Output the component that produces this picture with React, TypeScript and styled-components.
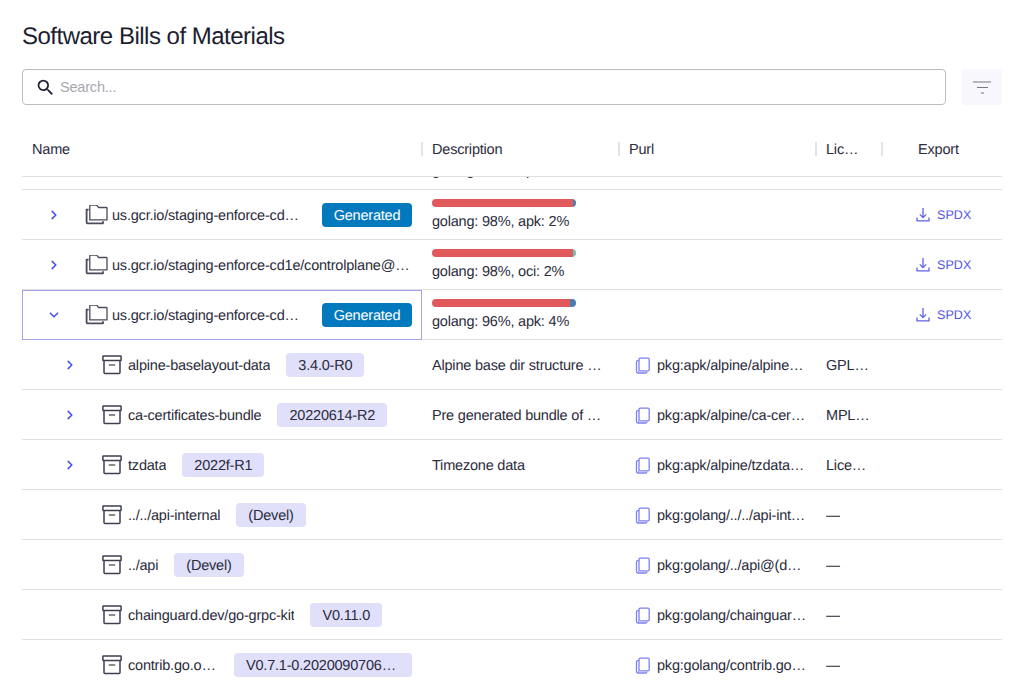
import styled, { createGlobalStyle } from 'styled-components';

const GlobalStyle = createGlobalStyle`
  html, body {
    margin: 0;
    height: 688px;
    overflow: hidden;
    background: #ffffff;
  }
`;

interface IChunk {
  color: string;
  percent: number;
}

interface IRow {
  name: string;
  level: 0 | 1;
  nameWidth?: number;
  badge?: string;
  generated?: boolean;
  expander?: 'right' | 'down';
  selected?: boolean;
  chunks?: IChunk[];
  summary?: string;
  description?: string;
  purl?: string;
  license?: string;
  exportable?: boolean;
}

const RED = '#e2595c';
const BLUE = '#4a7cae';
const TEAL = '#70bdb1';

const rows: IRow[] = [
  {
    name: 'us.gcr.io/staging-enforce-cd1e/controlplane@sha256',
    level: 0,
    nameWidth: 189,
    generated: true,
    expander: 'right',
    chunks: [
      { color: RED, percent: 98 },
      { color: BLUE, percent: 2 },
    ],
    summary: 'golang: 98%, apk: 2%',
    exportable: true,
  },
  {
    name: 'us.gcr.io/staging-enforce-cd1e/controlplane@sha256',
    level: 0,
    expander: 'right',
    chunks: [
      { color: RED, percent: 98 },
      { color: TEAL, percent: 2 },
    ],
    summary: 'golang: 98%, oci: 2%',
    exportable: true,
  },
  {
    name: 'us.gcr.io/staging-enforce-cd1e/controlplane@sha256',
    level: 0,
    nameWidth: 189,
    generated: true,
    expander: 'down',
    selected: true,
    chunks: [
      { color: RED, percent: 96 },
      { color: BLUE, percent: 4 },
    ],
    summary: 'golang: 96%, apk: 4%',
    exportable: true,
  },
  {
    name: 'alpine-baselayout-data',
    level: 1,
    badge: '3.4.0-R0',
    expander: 'right',
    description: 'Alpine base dir structure and init scripts',
    purl: 'pkg:apk/alpine/alpine-baselayout-data@3.4.0-r0',
    license: 'GPL-2.0-only',
  },
  {
    name: 'ca-certificates-bundle',
    level: 1,
    badge: '20220614-R2',
    expander: 'right',
    description: 'Pre generated bundle of Mozilla certificates',
    purl: 'pkg:apk/alpine/ca-certificates-bundle@20220614-r2',
    license: 'MPL-2.0 AND MIT',
  },
  {
    name: 'tzdata',
    level: 1,
    badge: '2022f-R1',
    expander: 'right',
    description: 'Timezone data',
    purl: 'pkg:apk/alpine/tzdata@2022f-r1',
    license: 'License-Ref',
  },
  {
    name: '../../api-internal',
    level: 1,
    badge: '(Devel)',
    purl: 'pkg:golang/../../api-internal@(devel)',
    license: '—',
  },
  {
    name: '../api',
    level: 1,
    badge: '(Devel)',
    purl: 'pkg:golang/../api@(devel)#module',
    license: '—',
  },
  {
    name: 'chainguard.dev/go-grpc-kit',
    level: 1,
    badge: 'V0.11.0',
    purl: 'pkg:golang/chainguard.dev/go-grpc-kit@v0.11.0',
    license: '—',
  },
  {
    name: 'contrib.go.opencensus.io/exporter',
    level: 1,
    nameWidth: 90,
    badge: 'V0.7.1-0.20200907061046-05415f1de66d',
    purl: 'pkg:golang/contrib.go.opencensus.io/exporter',
    license: '—',
  },
];

function SearchIcon() {
  return (
    <svg width="21" height="21" viewBox="0 0 24 24" fill="#1f2133">
      <path d="M15.5 14h-.79l-.28-.27A6.47 6.47 0 0 0 16 9.5 6.5 6.5 0 1 0 9.5 16c1.61 0 3.09-.59 4.23-1.57l.27.28v.79l5 4.99L20.49 19l-4.99-5zm-6 0C7.01 14 5 11.99 5 9.5S7.01 5 9.5 5 14 7.01 14 9.5 11.99 14 9.5 14z" />
    </svg>
  );
}

function FilterIcon() {
  return (
    <svg width="18" height="13" viewBox="0 0 18 13" fill="none" stroke="#77777f" strokeWidth="1.2">
      <path d="M0 1h18M4 6.5h11M8 12h3" />
    </svg>
  );
}

function Chevron({ down }: { down: boolean }) {
  return (
    <svg width="16" height="16" viewBox="0 0 16 16" fill="none" stroke="#4f52e6" strokeWidth="1.6" strokeLinecap="round" strokeLinejoin="round">
      <path d={down ? 'M4.4 6.2 8 9.8l3.6-3.6' : 'M6.2 4.4 9.8 8l-3.6 3.6'} />
    </svg>
  );
}

function ImageStackIcon() {
  return (
    <svg width="23" height="20" viewBox="0 0.9 23 20" fill="none" stroke="#4a4b5c" strokeWidth="1.3" strokeLinejoin="round">
      <path d="M4.8 15.8V1.8c0-.5.3-.8.8-.8h6l2 2.4h7.6c.5 0 .8.3.8.8v11.6z" />
      <path d="M3.6 5.6H1.6v12.8c0 .5.3.8.8.8H18v-2" strokeWidth="1.8" />
    </svg>
  );
}

function ArchiveIcon() {
  return (
    <svg width="20" height="20" viewBox="0 0 20 20" fill="none" stroke="#3e3f50" strokeWidth="1.5" strokeLinejoin="round">
      <rect x="0.9" y="1" width="18.2" height="4.4" rx="0.5" />
      <path d="M2 5.4v12c0 .6.4 1 1 1h14c.6 0 1-.4 1-1v-12" />
      <path d="M6.8 10h6.4" strokeWidth="1.2" />
    </svg>
  );
}

function CopyIcon() {
  return (
    <svg width="16" height="17" viewBox="0 0 16 17" fill="none" stroke="#7d80ef" strokeWidth="1.3" strokeLinejoin="round">
      <rect x="4" y="1.2" width="10.2" height="12.6" rx="1.2" />
      <path d="M4 3.6H2.9c-.8 0-1.4.6-1.4 1.4v9.6c0 .8.6 1.4 1.4 1.4h7.6c.8 0 1.4-.5 1.4-1.2" />
      <path d="M3 14.4h1" strokeWidth="1" />
    </svg>
  );
}

function DownloadIcon() {
  return (
    <svg width="16" height="16" viewBox="0 0 16 16" fill="none" stroke="#5f62e8" strokeWidth="1.3" strokeLinejoin="round">
      <path d="M8 1v9.5M4.8 7.4 8 10.6l3.2-3.2" />
      <path d="M2 10.5v3.4h12v-3.4" />
    </svg>
  );
}

function NameCell({ row }: { row: IRow }) {
  return (
    <NameBox $selected={row.selected}>
      <ExpanderSlot $level={row.level}>{row.expander && <Chevron down={row.expander === 'down'} />}</ExpanderSlot>
      <IconSlot $level={row.level}>{row.level === 0 ? <ImageStackIcon /> : <ArchiveIcon />}</IconSlot>
      <NameText $width={row.nameWidth}>{row.name}</NameText>
      {row.generated && <GeneratedBadge>Generated</GeneratedBadge>}
      {row.badge && <VersionBadge>{row.badge}</VersionBadge>}
    </NameBox>
  );
}

function App() {
  return (
    <Page>
      <GlobalStyle />
      <Title>Software Bills of Materials</Title>
      <Toolbar>
        <SearchBox>
          <SearchIcon />
          <SearchInput placeholder="Search..." />
        </SearchBox>
        <FilterButton>
          <FilterIcon />
        </FilterButton>
      </Toolbar>
      <Table>
        <HeaderRow>
          <HeaderCell>Name</HeaderCell>
          <HeaderCell>Description</HeaderCell>
          <HeaderCell>Purl</HeaderCell>
          <HeaderCell>Lic…</HeaderCell>
          <ExportHeader>Export</ExportHeader>
        </HeaderRow>
        <ClippedRow>
          <Summary>golang: 98%, apk: 2%</Summary>
        </ClippedRow>
        {rows.map((row, index) => (
          <Row key={index}>
            <NameCell row={row} />
            <DescriptionCell>
              {row.chunks && (
                <>
                  <Bar>
                    {row.chunks.map((chunk) => (
                      <BarChunk key={chunk.color} $color={chunk.color} $percent={chunk.percent} />
                    ))}
                  </Bar>
                  <Summary>{row.summary}</Summary>
                </>
              )}
              {row.description && <CellText>{row.description}</CellText>}
            </DescriptionCell>
            <PurlCell>
              {row.purl && (
                <>
                  <CopyIcon />
                  <CellText>{row.purl}</CellText>
                </>
              )}
            </PurlCell>
            <LicenseCell>{row.license && <CellText>{row.license}</CellText>}</LicenseCell>
            <ExportCell>
              {row.exportable && (
                <ExportLink>
                  <DownloadIcon />
                  SPDX
                </ExportLink>
              )}
            </ExportCell>
          </Row>
        ))}
      </Table>
    </Page>
  );
}

export default App;

const COLUMNS = '400px 197px 197px 66px 120px';

const Page = styled.div`
  padding: 0 25px 0 22px;
  font-family: 'Liberation Sans', Arial, sans-serif;
  font-size: 14.5px;
  letter-spacing: -0.2px;
  color: #2b2c3d;
  text-rendering: geometricPrecision;
`;

const Title = styled.h1`
  margin: 0;
  padding-top: 23px;
  height: 46px;
  font-size: 24px;
  line-height: 28px;
  font-weight: 400;
  letter-spacing: -0.5px;
  color: #1c1e30;
`;

const Toolbar = styled.div`
  display: flex;
  column-gap: 16px;
  height: 36px;
`;

const SearchBox = styled.label`
  flex: 1;
  display: flex;
  align-items: center;
  column-gap: 4px;
  padding-left: 12px;
  border: 1px solid #bdbdbd;
  border-radius: 4px;
`;

const SearchInput = styled.input`
  flex: 1;
  border: 0;
  outline: 0;
  padding: 0;
  background: none;
  font-family: inherit;
  font-size: 14.5px;
  letter-spacing: -0.2px;
  color: #2b2c3d;

  &::placeholder {
    color: #a8a8ae;
    opacity: 1;
  }
`;

const FilterButton = styled.button`
  width: 40px;
  padding: 0;
  border: 0;
  border-radius: 4px;
  background: #f7f7fd;
  display: flex;
  align-items: center;
  justify-content: center;
`;

const Table = styled.div`
  margin-top: 20px;
  width: 980px;
`;

const HeaderRow = styled.div`
  display: grid;
  grid-template-columns: ${COLUMNS};
  height: 52px;
  box-sizing: border-box;
  padding-bottom: 2px;
  border-bottom: 1px solid #e0e0e0;
  align-items: center;
`;

const HeaderCell = styled.div`
  position: relative;
  padding-left: 10px;
  line-height: 16px;

  &:not(:first-child)::before {
    content: '';
    position: absolute;
    left: -1px;
    top: 0;
    width: 2px;
    height: 14px;
    background: #e3e3e3;
  }
`;

const ExportHeader = styled(HeaderCell)`
  padding-left: 36px;
`;

const ClippedRow = styled.div`
  height: 13px;
  box-sizing: border-box;
  overflow: hidden;
  padding: 0 0 9px 410px;
  border-bottom: 1px solid #e0e0e0;
  display: flex;
  align-items: flex-end;
`;

const Row = styled.div`
  display: grid;
  grid-template-columns: ${COLUMNS};
  height: 50px;
  box-sizing: border-box;
  border-bottom: 1px solid #e0e0e0;
`;

const NameBox = styled.div<{ $selected?: boolean }>`
  display: flex;
  align-items: center;
  height: 50px;
  box-sizing: border-box;
  padding-right: 9px;
  border: 1px solid ${(p) => (p.$selected ? '#a3a3ea' : 'transparent')};
`;

const ExpanderSlot = styled.div<{ $level: number }>`
  flex: none;
  width: ${(p) => (p.$level === 0 ? '62px' : '79px')};
  display: flex;
  padding-left: ${(p) => (p.$level === 0 ? '23px' : '39px')};
  box-sizing: border-box;
`;

const IconSlot = styled.div<{ $level: number }>`
  flex: none;
  width: ${(p) => (p.$level === 0 ? '27px' : '26px')};
  display: flex;
  align-items: center;
`;

const NameText = styled.span<{ $width?: number }>`
  flex: ${(p) => (p.$width ? `0 0 ${p.$width}px` : '0 1 auto')};
  min-width: 0;
  padding-top: 2px;
  white-space: nowrap;
  overflow: hidden;
  text-overflow: ellipsis;
`;

const GeneratedBadge = styled.span`
  flex: none;
  margin-left: auto;
  width: 90px;
  height: 24px;
  line-height: 26px;
  text-align: center;
  border-radius: 4px;
  background: #0279bd;
  color: #ffffff;
`;

const VersionBadge = styled.span`
  flex: 0 1 auto;
  min-width: 0;
  margin-left: 16px;
  padding: 0 12px;
  height: 24px;
  line-height: 26px;
  border-radius: 4px;
  background: #e0e0fb;
  white-space: nowrap;
  overflow: hidden;
  text-overflow: ellipsis;
`;

const DescriptionCell = styled.div`
  min-width: 0;
  padding: 0 16px 0 10px;
  display: flex;
  flex-direction: column;
  justify-content: center;
`;

const CellText = styled.span`
  min-width: 0;
  padding-top: 2px;
  white-space: nowrap;
  overflow: hidden;
  text-overflow: ellipsis;
`;

const Bar = styled.div`
  display: flex;
  width: 144px;
  height: 8px;
  border-radius: 4px;
  overflow: hidden;
`;

const BarChunk = styled.div<{ $color: string; $percent: number }>`
  width: ${(p) => p.$percent}%;
  background: ${(p) => p.$color};
`;

const Summary = styled.div`
  margin: 7px 0 1px;
  line-height: 16px;
  white-space: nowrap;
`;

const PurlCell = styled.div`
  min-width: 0;
  padding: 0 8px 0 16px;
  display: flex;
  align-items: center;
  column-gap: 6px;

  svg {
    flex: none;
  }
`;

const LicenseCell = styled.div`
  min-width: 0;
  padding: 0 12px 0 10px;
  display: flex;
  align-items: center;
`;

const ExportCell = styled.div`
  padding-left: 33px;
  display: flex;
  align-items: center;
`;

const ExportLink = styled.a`
  display: flex;
  align-items: center;
  column-gap: 6px;
  font-size: 12.5px;
  letter-spacing: 0.1px;
  color: #5357e4;
`;
